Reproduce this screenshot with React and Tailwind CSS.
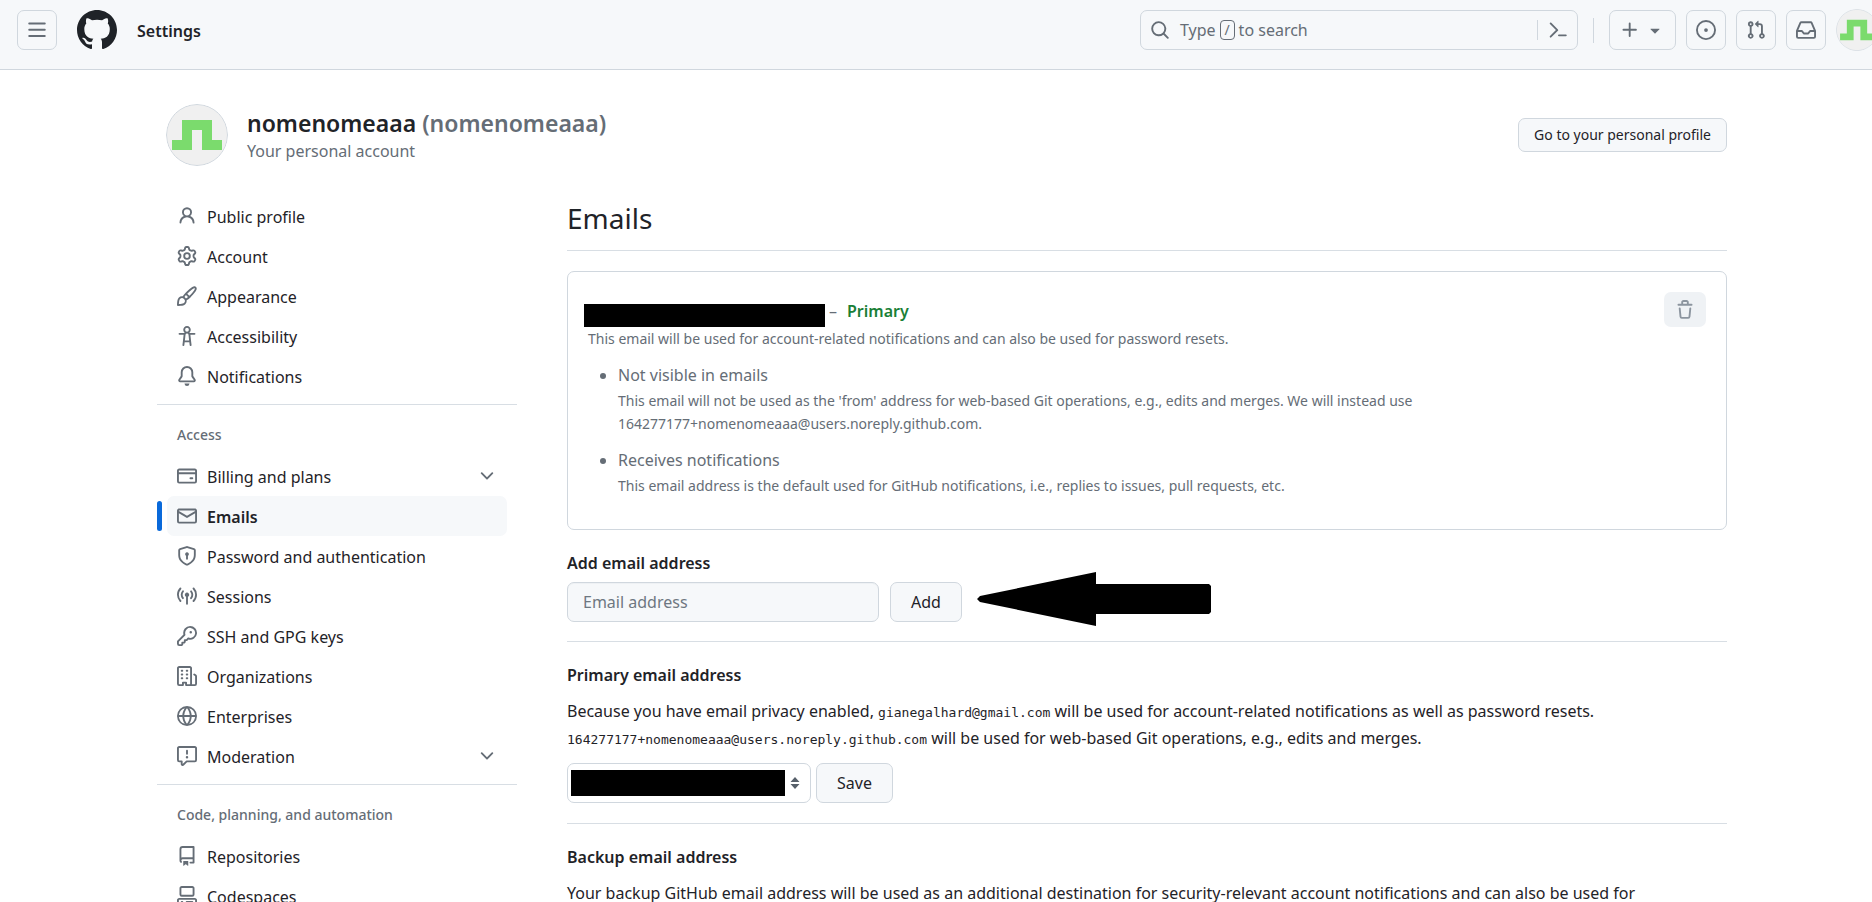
import React from "react";

/* 16px icon outlines, keyed by name */
const ICONS = {
  menu: "M1 2.75A.75.75 0 0 1 1.75 2h12.5a.75.75 0 0 1 0 1.5H1.75A.75.75 0 0 1 1 2.75Zm0 5A.75.75 0 0 1 1.75 7h12.5a.75.75 0 0 1 0 1.5H1.75A.75.75 0 0 1 1 7.75ZM1.75 12h12.5a.75.75 0 0 1 0 1.5H1.75a.75.75 0 0 1 0-1.5Z",
  github: "M8 0c4.42 0 8 3.58 8 8a8.013 8.013 0 0 1-5.45 7.59c-.4.08-.55-.17-.55-.38 0-.27.01-1.13.01-2.2 0-.75-.25-1.23-.54-1.48 1.78-.2 3.65-.88 3.65-3.95 0-.88-.31-1.59-.82-2.15.08-.2.36-1.02-.08-2.12 0 0-.67-.22-2.2.82-.64-.18-1.32-.27-2-.27-.68 0-1.36.09-2 .27-1.53-1.03-2.2-.82-2.2-.82-.44 1.1-.16 1.92-.08 2.12-.51.56-.82 1.28-.82 2.15 0 3.06 1.86 3.75 3.64 3.95-.23.2-.44.55-.51 1.07-.46.21-1.61.55-2.33-.66-.15-.24-.6-.83-1.23-.82-.67.01-.27.38.01.53.34.19.73.9.82 1.13.16.45.68 1.31 2.69.94 0 .67.01 1.3.01 1.49 0 .21-.15.45-.55.38A7.995 7.995 0 0 1 0 8c0-4.42 3.58-8 8-8Z",
  search: "M10.68 11.74a6 6 0 0 1-7.922-8.982 6 6 0 0 1 8.982 7.922l3.04 3.04a.749.749 0 0 1-.326 1.275.749.749 0 0 1-.734-.215ZM11.5 7a4.499 4.499 0 1 0-8.997 0A4.499 4.499 0 0 0 11.5 7Z",
  command: "m6.354 8.04-4.773 4.773a.75.75 0 1 0 1.061 1.06L7.945 8.57a.75.75 0 0 0 0-1.06L2.642 2.206a.75.75 0 0 0-1.06 1.061L6.353 8.04ZM8.75 11.5a.75.75 0 0 0 0 1.5h5.5a.75.75 0 0 0 0-1.5h-5.5Z",
  plus: "M7.75 2a.75.75 0 0 1 .75.75V7h4.25a.75.75 0 0 1 0 1.5H8.5v4.25a.75.75 0 0 1-1.5 0V8.5H2.75a.75.75 0 0 1 0-1.5H7V2.75A.75.75 0 0 1 7.75 2Z",
  triangle: "m4.427 7.427 3.396 3.396a.25.25 0 0 0 .354 0l3.396-3.396A.25.25 0 0 0 11.396 7H4.604a.25.25 0 0 0-.177.427Z",
  issue: "M8 9.5a1.5 1.5 0 1 0 0-3 1.5 1.5 0 0 0 0 3ZM8 0a8 8 0 1 1 0 16A8 8 0 0 1 8 0ZM1.5 8a6.5 6.5 0 1 0 13 0 6.5 6.5 0 0 0-13 0Z",
  pull: "M1.5 3.25a2.25 2.25 0 1 1 3 2.122v5.256a2.251 2.251 0 1 1-1.5 0V5.372A2.25 2.25 0 0 1 1.5 3.25Zm5.677-.177L9.573.677A.25.25 0 0 1 10 .854V2.5h1A2.5 2.5 0 0 1 13.5 5v5.628a2.251 2.251 0 1 1-1.5 0V5a1 1 0 0 0-1-1h-1v1.646a.25.25 0 0 1-.427.177L7.177 3.427a.25.25 0 0 1 0-.354ZM3.75 2.5a.75.75 0 1 0 0 1.5.75.75 0 0 0 0-1.5Zm0 9.5a.75.75 0 1 0 0 1.5.75.75 0 0 0 0-1.5Zm8.25.75a.75.75 0 1 0 1.5 0 .75.75 0 0 0-1.5 0Z",
  inbox: "M2.8 2.06A1.75 1.75 0 0 1 4.41 1h7.18c.7 0 1.333.417 1.61 1.06l2.74 6.395c.04.093.06.194.06.295v4.5A1.75 1.75 0 0 1 14.25 15H1.75A1.75 1.75 0 0 1 0 13.25v-4.5c0-.101.02-.202.06-.295Zm1.61.44a.25.25 0 0 0-.23.152L1.887 8H4.75a.75.75 0 0 1 .6.3L6.625 10h2.75l1.275-1.7a.75.75 0 0 1 .6-.3h2.863L11.82 2.652a.25.25 0 0 0-.23-.152Zm10.09 7h-2.875l-1.275 1.7a.75.75 0 0 1-.6.3h-3.5a.75.75 0 0 1-.6-.3L4.375 9.5H1.5v3.75c0 .138.112.25.25.25h12.5a.25.25 0 0 0 .25-.25Z",
  person: "M10.561 8.073a6.005 6.005 0 0 1 3.432 5.142.75.75 0 1 1-1.498.07 4.5 4.5 0 0 0-8.99 0 .75.75 0 0 1-1.498-.07 6.004 6.004 0 0 1 3.431-5.142 3.999 3.999 0 1 1 5.123 0ZM10.5 5a2.5 2.5 0 1 0-5 0 2.5 2.5 0 0 0 5 0Z",
  gear: "M8 0a8.2 8.2 0 0 1 .701.031C9.444.095 9.99.645 10.16 1.29l.288 1.107c.018.066.079.158.212.224.231.114.454.243.668.386.123.082.233.09.299.071l1.103-.303c.644-.176 1.392.021 1.82.63.27.385.506.792.704 1.218.315.675.111 1.422-.364 1.891l-.814.806c-.049.048-.098.147-.088.294.016.257.016.515 0 .772-.01.147.038.246.088.294l.814.806c.475.469.679 1.216.364 1.891a7.977 7.977 0 0 1-.704 1.217c-.428.61-1.176.807-1.82.63l-1.102-.302c-.067-.019-.177-.011-.3.071a5.909 5.909 0 0 1-.668.386c-.133.066-.194.158-.211.224l-.29 1.106c-.168.646-.715 1.196-1.458 1.26a8.006 8.006 0 0 1-1.402 0c-.743-.064-1.289-.614-1.458-1.26l-.289-1.106c-.018-.066-.079-.158-.212-.224a5.738 5.738 0 0 1-.668-.386c-.123-.082-.233-.09-.299-.071l-1.103.303c-.644.176-1.392-.021-1.82-.63a8.12 8.12 0 0 1-.704-1.218c-.315-.675-.111-1.422.363-1.891l.815-.806c.05-.048.098-.147.088-.294a6.214 6.214 0 0 1 0-.772c.01-.147-.038-.246-.088-.294l-.815-.806C.635 6.045.431 5.298.746 4.623a7.92 7.92 0 0 1 .704-1.217c.428-.61 1.176-.807 1.82-.63l1.102.302c.067.019.177.011.3-.071.214-.143.437-.272.668-.386.133-.066.194-.158.211-.224l.29-1.106C6.009.645 6.556.095 7.299.03 7.53.01 7.764 0 8 0Zm-.571 1.525c-.036.003-.108.036-.137.146l-.289 1.105c-.147.561-.549.967-.998 1.189-.173.086-.34.183-.5.29-.417.278-.97.423-1.529.27l-1.103-.303c-.109-.03-.175.016-.195.045-.22.312-.412.644-.573.99-.014.031-.021.11.059.19l.815.806c.411.406.562.957.53 1.456a4.709 4.709 0 0 0 0 .582c.032.499-.119 1.05-.53 1.456l-.815.806c-.081.08-.073.159-.059.19.162.346.353.677.573.989.02.03.085.076.195.046l1.102-.303c.56-.153 1.113-.008 1.53.27.161.107.328.204.501.29.447.222.85.629.997 1.189l.289 1.105c.029.109.101.143.137.146a6.6 6.6 0 0 0 1.142 0c.036-.003.108-.036.137-.146l.289-1.105c.147-.561.549-.967.998-1.189.173-.086.34-.183.5-.29.417-.278.97-.423 1.529-.27l1.103.303c.109.029.175-.016.195-.045.22-.313.411-.644.573-.99.014-.031.021-.11-.059-.19l-.815-.806c-.411-.406-.562-.957-.53-1.456a4.709 4.709 0 0 0 0-.582c-.032-.499.119-1.05.53-1.456l.815-.806c.081-.08.073-.159.059-.19a6.464 6.464 0 0 0-.573-.989c-.02-.03-.085-.076-.195-.046l-1.102.303c-.56.153-1.113.008-1.53-.27a4.44 4.44 0 0 0-.501-.29c-.447-.222-.85-.629-.997-1.189l-.289-1.105c-.029-.11-.101-.143-.137-.146a6.6 6.6 0 0 0-1.142 0ZM11 8a3 3 0 1 1-6 0 3 3 0 0 1 6 0ZM9.5 8a1.5 1.5 0 1 0-3.001.001A1.5 1.5 0 0 0 9.5 8Z",
  brush: "M11.134 1.535c.7-.509 1.416-.942 2.076-1.155.649-.21 1.463-.267 2.069.34.603.601.568 1.411.368 2.07-.202.668-.624 1.39-1.125 2.096-1.011 1.424-2.496 2.987-3.775 4.249-1.098 1.084-2.132 1.839-3.04 2.3a3.744 3.744 0 0 1-1.055 3.217c-.431.431-1.065.691-1.657.861-.614.177-1.294.287-1.914.357A21.151 21.151 0 0 1 .797 16H.743l.007-.75H.749L.742 16a.75.75 0 0 1-.743-.742l.743-.008-.742.007v-.054a21.25 21.25 0 0 1 .13-2.284c.067-.647.187-1.287.358-1.914.17-.591.43-1.226.86-1.657a3.746 3.746 0 0 1 3.227-1.054c.466-.893 1.225-1.907 2.314-2.982 1.271-1.255 2.833-2.75 4.245-3.777ZM1.62 13.089c-.051.464-.086.929-.104 1.395.466-.018.932-.053 1.396-.104a10.511 10.511 0 0 0 1.668-.309c.526-.151.856-.325 1.011-.48a2.25 2.25 0 1 0-3.182-3.182c-.155.155-.329.485-.48 1.01a10.515 10.515 0 0 0-.309 1.67Zm10.396-10.34c-1.224.89-2.605 2.189-3.822 3.384l1.718 1.718c1.21-1.205 2.51-2.597 3.387-3.833.47-.662.78-1.227.912-1.662.134-.444.032-.551.009-.575h-.001V1.78c-.014-.014-.113-.113-.548.027-.432.14-.995.462-1.655.942Zm-4.832 7.266-.001.001a9.859 9.859 0 0 0 1.63-1.142L7.155 7.216a9.7 9.7 0 0 0-1.161 1.607c.482.302.889.71 1.19 1.192Z",
  accessibility: "M9.923 5.302c.063.063.122.129.178.198H14A.75.75 0 0 1 14 7h-3.3l.578 5.163.362 2.997a.75.75 0 0 1-1.49.18L9.868 13H6.132l-.282 2.34a.75.75 0 0 1-1.49-.18l.362-2.997L5.3 7H2a.75.75 0 0 1 0-1.5h3.9a2.54 2.54 0 0 1 .176-.198 3 3 0 1 1 3.847 0ZM9.2 7.073h-.001a1.206 1.206 0 0 0-2.398 0L6.305 11.5h3.39ZM9.5 3a1.5 1.5 0 1 0-3.001.001A1.5 1.5 0 0 0 9.5 3Z",
  bell: "M8 16a2 2 0 0 0 1.985-1.75c.017-.137-.097-.25-.235-.25h-3.5c-.138 0-.252.113-.235.25A2 2 0 0 0 8 16ZM3 5a5 5 0 0 1 10 0v2.947c0 .05.015.098.042.139l1.703 2.555A1.519 1.519 0 0 1 13.482 13H2.518a1.516 1.516 0 0 1-1.263-2.36l1.703-2.554A.255.255 0 0 0 3 7.947Zm5-3.5A3.5 3.5 0 0 0 4.5 5v2.947c0 .346-.102.683-.294.97l-1.703 2.556a.017.017 0 0 0-.003.01l.001.006c0 .002.002.004.004.006l.006.004.007.001h10.964l.007-.001.006-.004.004-.006.001-.007a.017.017 0 0 0-.003-.01l-1.703-2.554a1.745 1.745 0 0 1-.294-.97V5A3.5 3.5 0 0 0 8 1.5Z",
  card: "M10.75 9a.75.75 0 0 0 0 1.5h1.5a.75.75 0 0 0 0-1.5h-1.5ZM0 3.75C0 2.784.784 2 1.75 2h12.5c.966 0 1.75.784 1.75 1.75v8.5A1.75 1.75 0 0 1 14.25 14H1.75A1.75 1.75 0 0 1 0 12.25ZM14.5 6.5h-13v5.75c0 .138.112.25.25.25h12.5a.25.25 0 0 0 .25-.25Zm0-2.75a.25.25 0 0 0-.25-.25H1.75a.25.25 0 0 0-.25.25V5h13Z",
  mail: "M1.75 2h12.5c.966 0 1.75.784 1.75 1.75v8.5A1.75 1.75 0 0 1 14.25 14H1.75A1.75 1.75 0 0 1 0 12.25v-8.5C0 2.784.784 2 1.75 2ZM1.5 12.251c0 .138.112.25.25.25h12.5a.25.25 0 0 0 .25-.25V5.809L8.38 9.397a.75.75 0 0 1-.76 0L1.5 5.809v6.442Zm13-8.181v-.32a.25.25 0 0 0-.25-.25H1.75a.25.25 0 0 0-.25.25v.32L8 7.88Z",
  shield: "m8.533.133 5.25 1.68A1.75 1.75 0 0 1 15 3.48V7c0 1.566-.32 3.182-1.303 4.682-.983 1.498-2.585 2.813-5.032 3.855a1.697 1.697 0 0 1-1.33 0c-2.447-1.042-4.049-2.357-5.032-3.855C1.32 10.182 1 8.566 1 7V3.48a1.755 1.755 0 0 1 1.217-1.667l5.25-1.68a1.748 1.748 0 0 1 1.066 0Zm-.61 1.429.001.001-5.25 1.68a.251.251 0 0 0-.174.237V7c0 1.36.275 2.666 1.057 3.859.784 1.194 2.121 2.342 4.366 3.298a.196.196 0 0 0 .154 0c2.245-.957 3.582-2.103 4.366-3.297C13.225 9.666 13.5 8.358 13.5 7V3.48a.25.25 0 0 0-.174-.238l-5.25-1.68a.25.25 0 0 0-.153 0ZM9.5 6.5c0 .536-.286 1.032-.75 1.3v2.45a.75.75 0 0 1-1.5 0V7.8A1.5 1.5 0 1 1 9.5 6.5Z",
  broadcast: "M8.75 8.582v5.668a.75.75 0 0 1-1.5 0V8.582a1.75 1.75 0 1 1 1.5 0Zm3.983-7.125a.75.75 0 0 1 1.06.026A7.976 7.976 0 0 1 16 7c0 2.139-.84 4.083-2.207 5.517a.75.75 0 1 1-1.086-1.034A6.474 6.474 0 0 0 14.5 7a6.474 6.474 0 0 0-1.793-4.483.75.75 0 0 1 .026-1.06Zm-9.466 0c.3.286.312.76.026 1.06A6.474 6.474 0 0 0 1.5 7a6.47 6.47 0 0 0 1.793 4.483.75.75 0 0 1-1.086 1.034A7.973 7.973 0 0 1 0 7c0-2.139.84-4.083 2.207-5.517a.75.75 0 0 1 1.06-.026Zm8.556 2.321A4.988 4.988 0 0 1 13 7a4.988 4.988 0 0 1-1.177 3.222.75.75 0 1 1-1.146-.967A3.487 3.487 0 0 0 11.5 7c0-.86-.309-1.645-.823-2.255a.75.75 0 0 1 1.146-.967Zm-6.492.958A3.48 3.48 0 0 0 4.5 7a3.48 3.48 0 0 0 .823 2.255.75.75 0 0 1-1.146.967A4.981 4.981 0 0 1 3 7a4.982 4.982 0 0 1 1.188-3.236.75.75 0 1 1 1.143.972Z",
  key: "M10.5 0a5.499 5.499 0 1 1-1.288 10.848l-.932.932a.749.749 0 0 1-.53.22H7v.75a.749.749 0 0 1-.22.53l-.5.5a.749.749 0 0 1-.53.22H5v.75a.749.749 0 0 1-.22.53l-.5.5a.749.749 0 0 1-.53.22h-2A1.75 1.75 0 0 1 0 14.25v-2c0-.199.079-.389.22-.53l4.932-4.932A5.5 5.5 0 0 1 10.5 0Zm-4 5.5c-.001.431.069.86.205 1.269a.75.75 0 0 1-.181.768L1.5 12.56v1.69c0 .138.112.25.25.25h1.69l.06-.06v-1.19a.75.75 0 0 1 .75-.75h1.19l.06-.06v-1.19a.75.75 0 0 1 .75-.75h1.19l1.023-1.025a.75.75 0 0 1 .768-.18A4 4 0 1 0 6.5 5.5ZM11 6a1 1 0 1 1 0-2 1 1 0 0 1 0 2Z",
  organization: "M1.75 16A1.75 1.75 0 0 1 0 14.25V1.75C0 .784.784 0 1.75 0h8.5C11.216 0 12 .784 12 1.75v12.5c0 .085-.006.168-.018.25h2.268a.25.25 0 0 0 .25-.25V8.285a.25.25 0 0 0-.111-.208l-1.055-.703a.749.749 0 1 1 .832-1.248l1.055.703c.487.325.779.871.779 1.456v5.965A1.75 1.75 0 0 1 14.25 16h-3.5a.766.766 0 0 1-.197-.026c-.099.017-.2.026-.303.026h-3a.75.75 0 0 1-.75-.75V14h-1v1.25a.75.75 0 0 1-.75.75Zm-.25-1.75c0 .138.112.25.25.25H4v-1.25a.75.75 0 0 1 .75-.75h2.5a.75.75 0 0 1 .75.75v1.25h2.25a.25.25 0 0 0 .25-.25V1.75a.25.25 0 0 0-.25-.25h-8.5a.25.25 0 0 0-.25.25ZM3.75 6h.5a.75.75 0 0 1 0 1.5h-.5a.75.75 0 0 1 0-1.5ZM3 3.75A.75.75 0 0 1 3.75 3h.5a.75.75 0 0 1 0 1.5h-.5A.75.75 0 0 1 3 3.75Zm4 3A.75.75 0 0 1 7.75 6h.5a.75.75 0 0 1 0 1.5h-.5A.75.75 0 0 1 7 6.75ZM7.75 3h.5a.75.75 0 0 1 0 1.5h-.5a.75.75 0 0 1 0-1.5ZM3 9.75A.75.75 0 0 1 3.75 9h.5a.75.75 0 0 1 0 1.5h-.5A.75.75 0 0 1 3 9.75ZM7.75 9h.5a.75.75 0 0 1 0 1.5h-.5a.75.75 0 0 1 0-1.5Z",
  globe: "M8 0a8 8 0 1 1 0 16A8 8 0 0 1 8 0ZM5.78 8.75a9.64 9.64 0 0 0 1.363 4.177c.255.426.542.832.857 1.215.245-.296.551-.705.857-1.215A9.64 9.64 0 0 0 10.22 8.75Zm4.44-1.5a9.64 9.64 0 0 0-1.363-4.177c-.307-.51-.612-.919-.857-1.215a9.927 9.927 0 0 0-.857 1.215A9.64 9.64 0 0 0 5.78 7.25Zm-5.944 1.5H1.543a6.507 6.507 0 0 0 4.666 5.5c-.123-.181-.24-.365-.352-.552-.715-1.192-1.437-2.874-1.581-4.948Zm-2.733-1.5h2.733c.144-2.074.866-3.756 1.58-4.948.12-.197.237-.381.353-.552a6.507 6.507 0 0 0-4.666 5.5Zm10.181 1.5c-.144 2.074-.866 3.756-1.58 4.948-.12.197-.237.381-.353.552a6.507 6.507 0 0 0 4.666-5.5Zm2.733-1.5a6.507 6.507 0 0 0-4.666-5.5c.123.181.24.365.353.552.714 1.192 1.436 2.874 1.58 4.948Z",
  report: "M0 1.75C0 .784.784 0 1.75 0h12.5C15.216 0 16 .784 16 1.75v9.5A1.75 1.75 0 0 1 14.25 13H8.06l-2.573 2.573A1.458 1.458 0 0 1 3 14.543V13H1.75A1.75 1.75 0 0 1 0 11.25Zm1.75-.25a.25.25 0 0 0-.25.25v9.5c0 .138.112.25.25.25h2a.75.75 0 0 1 .75.75v2.19l2.72-2.72a.749.749 0 0 1 .53-.22h6.5a.25.25 0 0 0 .25-.25v-9.5a.25.25 0 0 0-.25-.25Zm7 2.25v2.5a.75.75 0 0 1-1.5 0v-2.5a.75.75 0 0 1 1.5 0ZM9 9a1 1 0 1 1-2 0 1 1 0 0 1 2 0Z",
  repo: "M2 2.5A2.5 2.5 0 0 1 4.5 0h8.75a.75.75 0 0 1 .75.75v12.5a.75.75 0 0 1-.75.75h-2.5a.75.75 0 0 1 0-1.5h1.75v-2h-8a1 1 0 0 0-.714 1.7.75.75 0 1 1-1.072 1.05A2.495 2.495 0 0 1 2 11.5Zm10.5-1h-8a1 1 0 0 0-1 1v6.708A2.486 2.486 0 0 1 4.5 9h8ZM5 12.25a.25.25 0 0 1 .25-.25h3.5a.25.25 0 0 1 .25.25v3.25a.25.25 0 0 1-.4.2l-1.45-1.087a.249.249 0 0 0-.3 0L5.4 15.7a.25.25 0 0 1-.4-.2Z",
  codespaces: "M0 11.25c0-.966.784-1.75 1.75-1.75h12.5c.966 0 1.75.784 1.75 1.75v3A1.75 1.75 0 0 1 14.25 16H1.75A1.75 1.75 0 0 1 0 14.25Zm2-9.5C2 .784 2.784 0 3.75 0h8.5C13.216 0 14 .784 14 1.75v5a1.75 1.75 0 0 1-1.75 1.75h-8.5A1.75 1.75 0 0 1 2 6.75Zm1.75-.25a.25.25 0 0 0-.25.25v5c0 .138.112.25.25.25h8.5a.25.25 0 0 0 .25-.25v-5a.25.25 0 0 0-.25-.25Zm-2 9.5a.25.25 0 0 0-.25.25v3c0 .138.112.25.25.25h12.5a.25.25 0 0 0 .25-.25v-3a.25.25 0 0 0-.25-.25ZM7 12.75a.75.75 0 0 1 .75-.75h4.5a.75.75 0 0 1 0 1.5h-4.5a.75.75 0 0 1-.75-.75Zm-4 0a.75.75 0 0 1 .75-.75h.5a.75.75 0 0 1 0 1.5h-.5a.75.75 0 0 1-.75-.75Z",
  trash: "M11 1.75V3h2.25a.75.75 0 0 1 0 1.5H2.75a.75.75 0 0 1 0-1.5H5V1.75C5 .784 5.784 0 6.75 0h2.5C10.216 0 11 .784 11 1.75ZM4.496 6.675l.66 6.6a.25.25 0 0 0 .249.225h5.19a.25.25 0 0 0 .249-.225l.66-6.6a.75.75 0 0 1 1.492.149l-.66 6.6A1.748 1.748 0 0 1 10.595 15h-5.19a1.75 1.75 0 0 1-1.741-1.575l-.66-6.6a.75.75 0 1 1 1.492-.15ZM6.5 1.75V3h3V1.75a.25.25 0 0 0-.25-.25h-2.5a.25.25 0 0 0-.25.25Z",
  chevron: "M12.78 5.22a.749.749 0 0 1 0 1.06l-4.25 4.25a.749.749 0 0 1-1.06 0L3.22 6.28a.749.749 0 1 1 1.06-1.06L8 8.939l3.72-3.719a.749.749 0 0 1 1.06 0Z",
};

function Icon({ name, className = "size-5" }) {
  return (
    <svg viewBox="0 0 16 16" fill="currentColor" aria-hidden="true" className={`shrink-0 ${className}`}>
      <path d={ICONS[name]} />
    </svg>
  );
}

function Avatar({ className }) {
  return (
    <svg viewBox="0 0 62 62" aria-hidden="true" className={`shrink-0 rounded-full ${className}`}>
      <circle cx="31" cy="31" r="30.5" fill="#f0f0f0" stroke="#d0d7de" />
      <path fill="#7bdb6d" d="M6 36h10V16h30v20h10v10H36V26H26v20H6Z" />
    </svg>
  );
}

const NAV = [
  {
    items: [
      { icon: "person", label: "Public profile" },
      { icon: "gear", label: "Account" },
      { icon: "brush", label: "Appearance" },
      { icon: "accessibility", label: "Accessibility" },
      { icon: "bell", label: "Notifications" },
    ],
  },
  {
    title: "Access",
    items: [
      { icon: "card", label: "Billing and plans", expandable: true },
      { icon: "mail", label: "Emails", active: true },
      { icon: "shield", label: "Password and authentication" },
      { icon: "broadcast", label: "Sessions" },
      { icon: "key", label: "SSH and GPG keys" },
      { icon: "organization", label: "Organizations" },
      { icon: "globe", label: "Enterprises" },
      { icon: "report", label: "Moderation", expandable: true },
    ],
  },
  {
    title: "Code, planning, and automation",
    items: [
      { icon: "repo", label: "Repositories" },
      { icon: "codespaces", label: "Codespaces" },
    ],
  },
];

function NavItem({ icon, label, active, expandable }) {
  const row = "flex h-10 w-full items-center gap-2.5 rounded-[7px] px-2.5 text-left";
  const content = (
    <>
      <span className="text-[#656d76]"><Icon name={icon} /></span>
      <span className="grow pt-0.5">{label}</span>
    </>
  );
  if (expandable) {
    return (
      <li className="px-2.5">
        <button type="button" className={row}>
          {content}
          <span className="text-[#656d76]"><Icon name="chevron" /></span>
        </button>
      </li>
    );
  }
  return (
    <li className={active ? "flex items-center gap-[5px] pr-2.5" : "px-2.5"}>
      {active && <span className="h-[30px] w-[5px] shrink-0 rounded-[7px] bg-[#0969da]" />}
      <a href="#" className={active ? `${row} bg-[#f6f8fa] font-semibold` : row}>{content}</a>
    </li>
  );
}

function Header() {
  const box = "flex h-10 items-center justify-center rounded-[7px] border border-[#d0d7de] text-[#656d76]";
  return (
    <header className="flex h-[70px] shrink-0 justify-between overflow-hidden border-b border-[#d0d7de] bg-[#f6f8fa] pt-2.5 pl-[17px]">
      <div className="flex h-10 items-center gap-5">
        <button type="button" aria-label="Open menu" className={`${box} w-10`}><Icon name="menu" /></button>
        <a href="#" aria-label="Homepage"><Icon name="github" className="size-10" /></a>
        <a href="#" className="pt-0.5 font-semibold">Settings</a>
      </div>
      <div className="-mr-1.5 flex h-10 items-center gap-2.5">
        <div className="mr-[5px] flex h-10 w-[438px] items-center rounded-[7px] border border-[#d0d7de] text-[#656d76]">
          <button type="button" className="flex grow items-center pl-[9px] text-left">
            <Icon name="search" />
            <span className="ml-2.5">Type</span>
            <kbd className="mx-1 flex h-5 w-[15px] items-center justify-center rounded-sm border border-[#656d76] font-sans text-sm">/</kbd>
            <span>to search</span>
          </button>
          <button type="button" aria-label="Command palette" className="flex h-5 w-10 items-center border-l border-[#d0d7de] pl-2.5">
            <Icon name="command" />
          </button>
        </div>
        <span className="mr-[5px] h-[25px] w-px bg-[#d0d7de]" />
        <button type="button" aria-label="Create new" className={`${box} w-[67px] gap-[5px]`}>
          <Icon name="plus" />
          <Icon name="triangle" />
        </button>
        <button type="button" aria-label="Issues" className={`${box} w-10`}><Icon name="issue" /></button>
        <button type="button" aria-label="Pull requests" className={`${box} w-10`}><Icon name="pull" /></button>
        <button type="button" aria-label="Notifications" className={`${box} w-10`}><Icon name="inbox" /></button>
        <button type="button" aria-label="Account menu"><Avatar className="size-[42px]" /></button>
      </div>
    </header>
  );
}

const BUTTON = "h-10 rounded-[7px] border border-[#d0d7de] bg-[#f6f8fa] px-5";

export default function App() {
  return (
    <div className="flex h-screen flex-col overflow-hidden bg-white font-['Noto_Sans','Open_Sans',sans-serif] text-base leading-[27px] text-[#1f2328]">
      <Header />

      <div className="min-h-0 grow pr-[145px] pl-[157px]">
        <div className="flex items-center pt-[34px] pl-[9px]">
          <Avatar className="size-[62px]" />
          <div className="ml-[19px] grow pt-0.5">
            <h1 className="text-[23px] leading-[30px] font-semibold">
              nomenomeaaa <span className="text-[#656d76]">(nomenomeaaa)</span>
            </h1>
            <p className="text-[#656d76]">Your personal account</p>
          </div>
          <button type="button" className="h-[34px] rounded-[7px] border border-[#d0d7de] bg-[#f6f8fa] px-[15px] text-sm">
            Go to your personal profile
          </button>
        </div>

        <div className="flex gap-[50px] pt-[30px]">
          <nav aria-label="Settings" className="w-[360px] shrink-0">
            {NAV.map((group, i) => (
              <section key={i} className={i ? "mt-2 border-t border-[#d8dee4] pt-5" : ""}>
                {group.title && (
                  <h2 className="mb-[11px] px-5 text-sm font-medium text-[#656d76]">{group.title}</h2>
                )}
                <ul>
                  {group.items.map((item) => <NavItem key={item.label} {...item} />)}
                </ul>
              </section>
            ))}
          </nav>

          <main className="min-w-0 grow">
            <h2 className="border-b border-[#d8dee4] pb-2.5 text-[28px] leading-[44px]">Emails</h2>

            <section className="mt-5 flex items-start justify-between rounded-[7px] border border-[#d0d7de] pt-5 pr-5 pb-8 pl-5 text-[#656d76]">
              <div className="pt-1">
                <div className="-ml-1 flex h-[31px] items-center">
                  <span className="h-[23px] w-[241px] self-end bg-black" />
                  <span className="ml-1">–</span>
                  <span className="ml-2.5 font-semibold text-[#1a7f37]">Primary</span>
                </div>
                <p className="text-sm leading-[23px]">
                  This email will be used for account-related notifications and can also be used for password resets.
                </p>
                <ul className="list-disc pl-[30px]">
                  <li className="mt-3">
                    Not visible in emails
                    <p className="max-w-[840px] text-sm leading-[23px]">
                      This email will not be used as the 'from' address for web-based Git operations, e.g., edits and merges. We will instead use 164277177+nomenomeaaa@users.noreply.github.com.
                    </p>
                  </li>
                  <li className="mt-3">
                    Receives notifications
                    <p className="text-sm leading-[23px]">
                      This email address is the default used for GitHub notifications, i.e., replies to issues, pull requests, etc.
                    </p>
                  </li>
                </ul>
              </div>
              <button type="button" disabled aria-label="Delete email" className="flex h-[35px] w-[42px] items-center justify-center rounded-[7px] bg-[#eff2f5] text-[#8c959f]">
                <Icon name="trash" />
              </button>
            </section>

            <form className="border-b border-[#d8dee4] pt-5 pb-[19px]">
              <label htmlFor="email" className="font-semibold">Add email address</label>
              <div className="mt-[5px] flex items-start">
                <input
                  id="email"
                  type="email"
                  placeholder="Email address"
                  className="h-10 w-[312px] rounded-[7px] border border-[#d0d7de] bg-[#f6f8fa] px-[15px] shadow-[inset_0_1px_0_rgba(208,215,222,0.2)] placeholder:text-[#6e7781]"
                />
                <button type="button" className={`${BUTTON} ml-[11px]`}>Add</button>
                <svg viewBox="0 0 234 54" aria-hidden="true" className="-mt-2.5 -mb-1 ml-[15px] h-[54px] w-[234px]">
                  <path d="M0 27 3 24 119 0v12h113l2 2v26l-2 2H119v12L3 30Z" />
                </svg>
              </div>
            </form>

            <section className="border-b border-[#d8dee4] pt-5 pb-5">
              <h3 className="font-semibold">Primary email address</h3>
              <p className="mt-[9px]">
                Because you have email privacy enabled, <code className="font-['DejaVu_Sans_Mono',monospace] text-[13px] leading-none">gianegalhard@gmail.com</code> will be used for account-related notifications as well as password resets.{" "}
                <code className="font-['DejaVu_Sans_Mono',monospace] text-[13px] leading-none">164277177+nomenomeaaa@users.noreply.github.com</code> will be used for web-based Git operations, e.g., edits and merges.
              </p>
              <div className="mt-[11px] flex gap-[5px]">
                <div className="relative">
                  <select aria-label="Primary email" className="h-10 w-[244px] appearance-none rounded-[7px] border border-[#d0d7de] bg-white">
                    <option />
                  </select>
                  <div className="pointer-events-none absolute inset-0 flex items-center pl-1">
                    <span className="h-[26px] w-[214px] bg-black" />
                    <svg viewBox="0 0 10 12" aria-hidden="true" className="ml-[5px] h-3 w-2.5" fill="#57606a">
                      <path d="M5 0 9.5 5H.5ZM5 12 .5 7h9Z" />
                    </svg>
                  </div>
                </div>
                <button type="button" className={BUTTON}>Save</button>
              </div>
            </section>

            <section className="pt-5">
              <h3 className="font-semibold">Backup email address</h3>
              <p className="mt-[9px]">
                Your backup GitHub email address will be used as an additional destination for security-relevant account notifications and can also be used for
              </p>
            </section>
          </main>
        </div>
      </div>
    </div>
  );
}
